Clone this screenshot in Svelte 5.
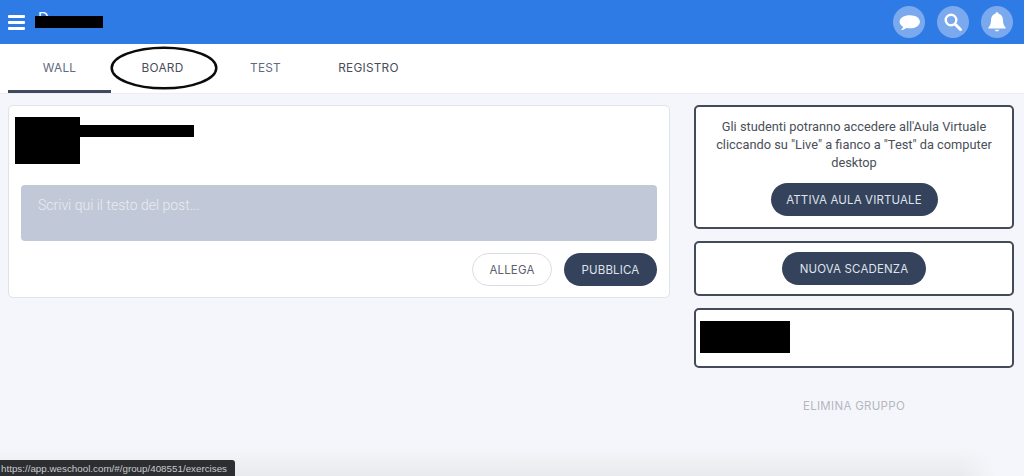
<script>
  const tabs = ['WALL', 'BOARD', 'TEST', 'REGISTRO'];
</script>

<div class="page">
  <header class="topbar">
    <div class="brand">
      <button class="burger" aria-label="Menu"><span></span><span></span><span></span></button>
      <div class="title">D<i class="redact"></i></div>
    </div>
    <div class="actions">
      <button class="circle" aria-label="Messaggi">
        <svg viewBox="0 0 24 24" width="25" height="25"><path fill="#fff" d="M12.500 5C7 5 2.500 7.600 2.500 11.200c0 2 1.300 3.700 3.300 4.800-.2 1.200-.9 2.300-2 3.200 2-.1 3.800-.9 5.100-2 1.100.3 2.300.4 3.600.4 5.400 0 9.500-2.900 9.500-6.400S17.900 5 12.500 5z"/></svg>
      </button>
      <button class="circle" aria-label="Cerca">
        <svg viewBox="0 0 24 24" width="24" height="24"><circle cx="10" cy="10" r="5.300" fill="none" stroke="#fff" stroke-width="2.400"/><path d="M14.200 14.200l5.300 5.300" stroke="#fff" stroke-width="3" stroke-linecap="round"/></svg>
      </button>
      <button class="circle" aria-label="Notifiche">
        <svg viewBox="0 0 24 24" width="26" height="26"><path fill="#fff" d="M12 3c-.9 0-1.500.6-1.500 1.400C7.900 5.100 6.500 7.300 6.500 10c0 4-1.100 5.800-2.500 7.200V18h16v-.8c-1.400-1.400-2.500-3.200-2.500-7.200 0-2.700-1.400-4.900-4-5.600C13.500 3.600 12.900 3 12 3z"/><path fill="#fff" d="M9.800 19.200a2.300 2.300 0 0 0 4.400 0z"/></svg>
      </button>
    </div>
  </header>

  <nav class="tabs">
    {#each tabs as tab, i}
      <a class="tab" class:active={i === 0} href="#top">{tab}</a>
    {/each}
    <svg class="ring" viewBox="0 0 108 44" width="108" height="44" aria-hidden="true"><ellipse cx="54" cy="22" rx="52.300" ry="20.300" fill="none" stroke="#0b0b0b" stroke-width="2.500"/></svg>
  </nav>

  <main class="content">
    <section class="post">
      <div class="author">
        <i class="redact avatar"></i>
        <i class="redact name"></i>
      </div>
      <div class="input">Scrivi qui il testo del post...</div>
      <div class="post-actions">
        <button class="pill ghost">ALLEGA</button>
        <button class="pill dark publish">PUBBLICA</button>
      </div>
    </section>

    <aside class="side">
      <div class="box live">
        <p>Gli studenti potranno accedere all'Aula Virtuale cliccando su "Live" a fianco a "Test" da computer desktop</p>
        <button class="pill dark">ATTIVA AULA VIRTUALE</button>
      </div>
      <div class="box deadline">
        <button class="pill dark">NUOVA SCADENZA</button>
      </div>
      <div class="box hidden-box"><i class="redact block"></i></div>
      <div class="delete">ELIMINA GRUPPO</div>
    </aside>
  </main>

  <div class="status">https://app.weschool.com/#/group/408551/exercises</div>
</div>

<style>
  :global(body) {
    margin: 0;
    overflow: hidden;
  }
  .page {
    position: relative;
    height: 476px;
    display: flex;
    flex-direction: column;
    overflow: hidden;
    background:
      linear-gradient(to right, rgba(244, 246, 251, 0) 960px, #f5f6fb 995px),
      linear-gradient(#f4f6fb 0, #f4f6fb 448px, #e9eaed 476px);
    font-family: Inter, "Liberation Sans", sans-serif;
  }
  button {
    font-family: inherit;
    cursor: pointer;
  }
  .redact {
    display: block;
    background: #000;
  }
  .topbar {
    height: 44px;
    flex: none;
    box-sizing: border-box;
    padding: 0 11px 0 8px;
    display: flex;
    align-items: center;
    justify-content: space-between;
    background: #2f7be6;
  }
  .brand {
    display: flex;
    align-items: center;
    gap: 10px;
  }
  .burger {
    width: 17px;
    height: 15px;
    padding: 0;
    border: 0;
    background: none;
    display: flex;
    flex-direction: column;
    justify-content: space-between;
  }
  .burger span {
    display: block;
    height: 3px;
    border-radius: 1px;
    background: #fff;
  }
  .title {
    position: relative;
    width: 68px;
    height: 12px;
    padding-left: 3px;
    box-sizing: border-box;
    color: #fff;
    font-size: 15px;
    line-height: 4px;
  }
  .title .redact {
    position: absolute;
    inset: 0;
  }
  .actions {
    display: flex;
    gap: 12px;
  }
  .circle {
    width: 32px;
    height: 32px;
    padding: 0;
    border: 0;
    border-radius: 50%;
    background: #7ba9ee;
    display: flex;
    align-items: center;
    justify-content: center;
  }
  .tabs {
    position: relative;
    height: 50px;
    flex: none;
    box-sizing: border-box;
    padding-left: 8px;
    display: flex;
    background: #fff;
    border-bottom: 1px solid #eceef3;
  }
  .tab {
    width: 103px;
    height: 49px;
    box-sizing: border-box;
    padding-top: 2px;
    display: flex;
    align-items: center;
    justify-content: center;
    font-size: 11.800px;
    letter-spacing: 0.25px;
    color: #5d6b80;
    text-decoration: none;
    border-bottom: 3px solid transparent;
  }
  .tab:nth-child(2), .tab:nth-child(4) {
    color: #474d59;
  }
  .tab.active {
    border-bottom-color: #3d4a60;
  }
  .ring {
    position: absolute;
    left: 110px;
    top: 2px;
  }
  .content {
    flex: 1;
    box-sizing: border-box;
    padding: 11px 10px 0 8px;
    display: flex;
    align-items: flex-start;
    gap: 24px;
  }
  .post {
    width: 662px;
    height: 193px;
    flex: none;
    box-sizing: border-box;
    padding: 11px 12px 0 6px;
    background: #fff;
    border: 1px solid #dfe3ea;
    border-radius: 5px;
  }
  .author {
    display: flex;
    align-items: flex-start;
    height: 47px;
  }
  .avatar {
    width: 65px;
    height: 47px;
  }
  .name {
    width: 114px;
    height: 12px;
    margin-top: 8px;
  }
  .input {
    height: 56px;
    margin: 21px 0 0 6px;
    box-sizing: border-box;
    padding: 11px 17px;
    background: #c1c9d8;
    border-radius: 4px;
    color: #e9ecf2;
    font: 300 14px/18px Roboto, sans-serif;
  }
  .post-actions {
    margin-top: 12px;
    display: flex;
    justify-content: flex-end;
    gap: 12px;
  }
  .pill {
    height: 33px;
    padding: 0;
    border-radius: 17px;
    font-size: 11.500px;
    letter-spacing: 0.15px;
    display: flex;
    align-items: center;
    justify-content: center;
  }
  .dark {
    border: 0;
    background: #35425c;
    color: #dfe3ea;
  }
  .ghost {
    width: 80px;
    border: 1px solid #dcdde2;
    background: #fff;
    color: #5b606a;
  }
  .publish {
    width: 93px;
  }
  .side {
    width: 320px;
    flex: none;
    display: flex;
    flex-direction: column;
    gap: 12px;
  }
  .box {
    box-sizing: border-box;
    background: #fff;
    border: 2px solid #434a58;
    border-radius: 5px;
  }
  .live {
    height: 124px;
    padding: 11px 14px 0;
    display: flex;
    flex-direction: column;
    align-items: center;
  }
  .live p {
    margin: 0;
    font: 400 12.800px/18px Roboto, sans-serif;
    text-align: center;
    color: #4a4f58;
  }
  .live .pill {
    width: 167px;
    margin-top: 11px;
    flex: none;
  }
  .deadline {
    height: 55px;
    display: flex;
    align-items: center;
    justify-content: center;
  }
  .deadline .pill {
    width: 144px;
  }
  .hidden-box {
    height: 60px;
    padding: 11px 0 0 4px;
  }
  .block {
    width: 90px;
    height: 32px;
  }
  .delete {
    margin-top: 19px;
    font-size: 11.500px;
    line-height: 14px;
    letter-spacing: 0.3px;
    text-align: center;
    color: #b4b7bf;
  }
  .status {
    position: absolute;
    left: 0;
    bottom: 0;
    width: 235px;
    height: 16px;
    box-sizing: border-box;
    padding-left: 1px;
    background: #2c2e32;
    border-radius: 0 3px 0 0;
    color: #c9cacc;
    font: 9.800px/17px "Liberation Sans", sans-serif;
    white-space: nowrap;
  }
</style>
